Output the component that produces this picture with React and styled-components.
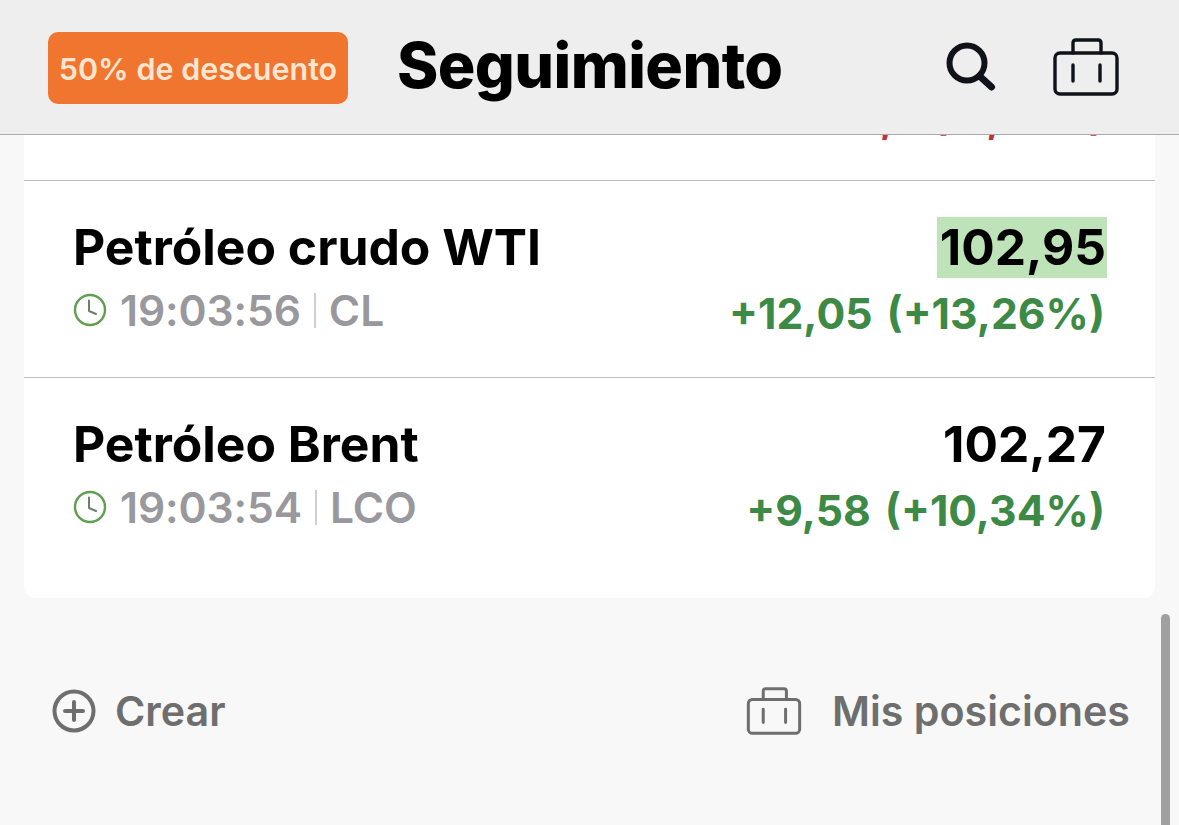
import styled, { createGlobalStyle } from 'styled-components';

const Global = createGlobalStyle`
    html, body {
        margin: 0;
        padding: 0;
        background: #F8F8F8;
    }
    body {
        font-family: 'Inter', 'Liberation Sans', sans-serif;
    }
`;

const quotes = [
    { name: "Nasdaq 100", time: "19:03:52", symbol: "NQ", price: "14.093,2", change: "-1,7 (-1,81%)", down: true },
    { name: "Petróleo crudo WTI", time: "19:03:56", symbol: "CL", price: "102,95", change: "+12,05 (+13,26%)", flash: true },
    { name: "Petróleo Brent", time: "19:03:54", symbol: "LCO", price: "102,27", change: "+9,58 (+10,34%)" },
];

function SearchIcon() {
    return (
        <svg width="54" height="54" viewBox="0 0 54 54" fill="none" stroke="#0F1219" strokeWidth="6" strokeLinecap="round">
            <circle cx="23" cy="23" r="17.5" />
            <path d="M35.5 36 L47.5 47" strokeWidth="7" />
        </svg>
    );
}

function CaseIcon({ width, height, color, stroke }) {
    return (
        <svg width={width} height={height} viewBox="0 0 66 58" fill="none" stroke={color} strokeWidth={stroke} strokeLinecap="round" strokeLinejoin="round">
            <rect x="2" y="15" width="62" height="41" rx="5" />
            <path d="M20 15 V5 Q20 2 23 2 H45 Q48 2 48 5 V15" />
            <path d="M20 27 V43 M47 27 V43" />
        </svg>
    );
}

function ClockIcon() {
    return (
        <svg width="34" height="34" viewBox="0 0 34 34" fill="none" stroke="#5F9F4F" strokeWidth="2.4" strokeLinecap="round" strokeLinejoin="round">
            <circle cx="17" cy="17" r="15" />
            <path d="M16 7.5 V18 L23 21" stroke="#6E7F68" strokeWidth="2" />
        </svg>
    );
}

function PlusIcon() {
    return (
        <svg width="44" height="44" viewBox="0 0 44 44" fill="none" stroke="#6E6E6E" strokeWidth="4" strokeLinecap="round">
            <circle cx="22" cy="22" r="19.5" />
            <path d="M22 13 V31 M13 22 H31" />
        </svg>
    );
}

export default function App() {
    return (
        <Page>
            <Global />
            <Header>
                <Promo>50% de descuento</Promo>
                <Title>Seguimiento</Title>
                <HeaderIcons>
                    <SearchIcon />
                    <CaseIcon width={66} height={58} color="#0F1219" stroke={3.4} />
                </HeaderIcons>
            </Header>
            <Content>
                <Card>
                    {quotes.map(q => (
                        <Row key={q.symbol}>
                            <div>
                                <Name>{q.name}</Name>
                                <Meta>
                                    <ClockIcon />
                                    <Time>{q.time}</Time>
                                    <Divider />
                                    <span>{q.symbol}</span>
                                </Meta>
                            </div>
                            <Values>
                                <Price $flash={q.flash}>{q.price}</Price>
                                <Change $down={q.down}>{q.change}</Change>
                            </Values>
                        </Row>
                    ))}
                </Card>
                <Footer>
                    <Action $gap="19px">
                        <PlusIcon />
                        Crear
                    </Action>
                    <Action $gap="30px">
                        <CaseIcon width={56} height={48} color="#6E6E6E" stroke={3.6} />
                        Mis posiciones
                    </Action>
                </Footer>
                <Scrollbar />
            </Content>
        </Page>
    );
}

const Page = styled.div`
    width: 1179px;
    height: 825px;
    overflow: hidden;
    display: flex;
    flex-direction: column;
    background: #F8F8F8;
`;

const Header = styled.header`
    box-sizing: border-box;
    flex: 0 0 135px;
    display: flex;
    align-items: center;
    padding: 0 60px 0 48px;
    background: #EEEEEE;
    border-bottom: 1px solid #ABABAB;
    position: relative;
    z-index: 1;
`;

const Promo = styled.div`
    box-sizing: border-box;
    flex: none;
    width: 300px;
    height: 72px;
    margin-top: 2px;
    display: flex;
    align-items: center;
    justify-content: center;
    background: #F0752E;
    border-radius: 10px;
    color: #FFE6D2;
    font-size: 30.5px;
    font-weight: 600;
    white-space: nowrap;
`;

const Title = styled.h1`
    margin: -5px 0 0 49px;
    font-size: 62.7px;
    font-weight: 800;
    letter-spacing: -0.6px;
    color: #000000;
    white-space: nowrap;
`;

const HeaderIcons = styled.div`
    margin-left: auto;
    display: flex;
    align-items: center;
    gap: 55px;
`;

const Content = styled.main`
    position: relative;
    flex: 1;
    padding: 0 24px;
    overflow: hidden;
`;

const Card = styled.section`
    margin-top: -151px;
    padding-bottom: 23px;
    background: #FFFFFF;
    border-radius: 12px;
`;

const Row = styled.article`
    box-sizing: border-box;
    height: 197px;
    padding: 36px 48px 0 49px;
    display: flex;
    justify-content: space-between;
    border-bottom: 1px solid #BDBDBD;

    &:last-child {
        border-bottom: none;
    }
`;

const Name = styled.div`
    font-size: 49.8px;
    line-height: 61px;
    font-weight: 700;
    color: #000000;
    white-space: nowrap;
`;

const Meta = styled.div`
    display: flex;
    align-items: center;
    height: 46px;
    margin-top: 9px;
    font-size: 42.6px;
    font-weight: 600;
    letter-spacing: -0.1px;
    color: #98989D;
`;

const Time = styled.span`
    margin-left: 13px;
`;

const Divider = styled.i`
    width: 2px;
    height: 35px;
    margin: 0 13px;
    background: #D0D0D3;
`;

const Values = styled.div`
    display: flex;
    flex-direction: column;
    align-items: flex-end;
`;

const Price = styled.div`
    padding: 0 1px 0 3px;
    font-size: 49.7px;
    line-height: 61px;
    font-weight: 700;
    color: #000000;
    background: ${p => (p.$flash ? '#BFE3B8' : 'transparent')};
`;

const Change = styled.div`
    height: 46px;
    margin: 13px 2px 0 0;
    line-height: 46px;
    font-size: 42.7px;
    font-weight: 700;
    word-spacing: 4px;
    color: ${p => (p.$down ? '#C2303A' : '#3D8A46')};
    white-space: nowrap;
`;

const Footer = styled.footer`
    display: flex;
    justify-content: space-between;
    align-items: center;
    padding: 88px 25px 0 28px;
`;

const Action = styled.div`
    display: flex;
    align-items: center;
    gap: ${p => p.$gap};
    font-size: 41.2px;
    font-weight: 600;
    color: #6E6E6E;
`;

const Scrollbar = styled.div`
    position: absolute;
    top: 479px;
    right: 9px;
    width: 9px;
    height: 260px;
    background: #A0A0A0;
    border-radius: 5px;
`;
